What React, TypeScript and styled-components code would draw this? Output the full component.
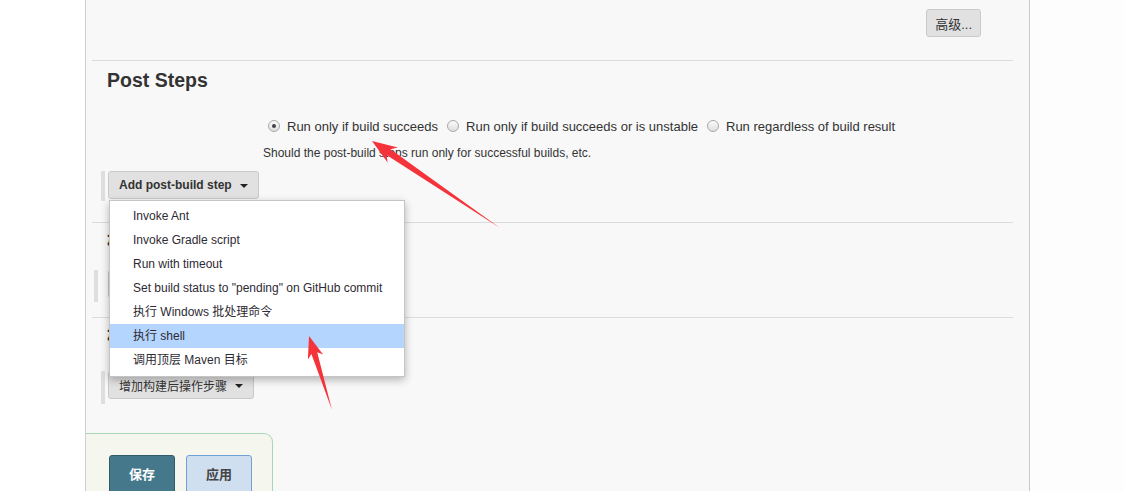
import React from "react";
import styled, { createGlobalStyle } from "styled-components";

const Global = createGlobalStyle`
  html, body { margin: 0; padding: 0; height: 100%; overflow: hidden; background: #fdfdfd; }
  #root { height: 100%; }
  * { box-sizing: border-box; }
  body { font-family: "Liberation Sans", Arial, "Noto Sans CJK SC", sans-serif; font-size: 13px; color: #333; }
`;

const Page = styled.div`
  position: relative;
  display: flex;
  height: 491px;
  width: 1124px;
`;

const Gutter = styled.div`
  width: 85px;
  flex: none;
  background: #ffffff;
`;

const Panel = styled.div`
  width: 945px;
  flex: none;
  background: #f8f8f8;
  border-left: 1px solid #cfcfcf;
  border-right: 1px solid #c8c8c8;
  display: flex;
  flex-direction: column;
`;

const Inner = styled.div`
  padding: 0 16px 0 6px;
  display: flex;
  flex-direction: column;
`;

const Section = styled.div<{ $h: number }>`
  height: ${(p) => p.$h}px;
  border-bottom: 1px solid #dcdcdc;
  display: flex;
  flex-direction: column;
  flex: none;
`;

const LastSection = styled.div`
  height: 115px;
  display: flex;
  flex-direction: column;
  flex: none;
`;

const AdvancedRow = styled.div`
  display: flex;
  justify-content: flex-end;
  padding: 9px 32px 0 0;
`;

const GrayButton = styled.button<{ $bold?: boolean; $fs?: number; $pad?: number }>`
  height: 28px;
  padding: 0 ${(p) => p.$pad ?? 10}px;
  border: 1px solid #c9c9c9;
  border-radius: 3px;
  background: #e1e1e1;
  color: #333;
  font-family: "Liberation Sans", Arial, "Noto Sans CJK SC", sans-serif;
  font-size: ${(p) => p.$fs ?? 13}px;
  font-weight: ${(p) => (p.$bold ? 700 : 400)};
  display: flex;
  align-items: center;
  gap: 8px;
  cursor: pointer;
`;

const Caret = styled.span`
  width: 0;
  height: 0;
  border-left: 4px solid transparent;
  border-right: 4px solid transparent;
  border-top: 4px solid #222;
  margin-top: 1px;
`;

const Heading = styled.h2<{ $top: number }>`
  margin: ${(p) => p.$top}px 0 0 15px;
  font-size: 19.5px;
  line-height: 24px;
  font-weight: 700;
  color: #333;
`;

const OptionBlock = styled.div`
  margin: 24px 0 0 171px;
  display: flex;
  flex-direction: column;
`;

const RadioRow = styled.div`
  display: flex;
  align-items: center;
  height: 20px;
  padding-left: 5px;
`;

const RadioLabel = styled.label`
  display: flex;
  align-items: center;
  margin-right: 9px;
  font-size: 13px;
  color: #333;
  white-space: nowrap;
`;

const RadioDot = styled.span<{ $on?: boolean }>`
  width: 12px;
  height: 12px;
  border-radius: 50%;
  border: 1px solid #a9a9a9;
  background: linear-gradient(#fbfbfb, #dedede);
  margin-right: 7px;
  display: flex;
  align-items: center;
  justify-content: center;
  &::after {
    content: "";
    display: ${(p) => (p.$on ? "block" : "none")};
    width: 4px;
    height: 4px;
    border-radius: 50%;
    background: #444;
  }
`;

const Help = styled.div`
  margin-top: 9px;
  height: 16px;
  line-height: 16px;
  font-size: 12px;
  color: #333;
`;

const StepRow = styled.div<{ $top: number; $left?: number; $gap?: number }>`
  margin: ${(p) => p.$top}px 0 0 ${(p) => p.$left ?? 9}px;
  display: flex;
  align-items: flex-start;
  gap: ${(p) => p.$gap ?? 3}px;
  position: relative;
`;

const Handle = styled.div<{ $h?: number }>`
  width: 4px;
  height: ${(p) => p.$h ?? 30}px;
  background: #dedede;
`;

const MenuAnchor = styled.div`
  position: relative;
`;

const Menu = styled.ul`
  position: absolute;
  top: 100%;
  left: 1px;
  width: 296px;
  margin: 1px 0 0;
  padding: 3px 0 4px;
  list-style: none;
  background: #fff;
  border: 1px solid #c4c4c4;
  box-shadow: 0 3px 8px rgba(0, 0, 0, 0.28);
  z-index: 5;
`;

const MenuItem = styled.li<{ $active?: boolean }>`
  height: 24px;
  line-height: 24px;
  padding-left: 23px;
  font-size: 12px;
  color: #2e2a33;
  background: ${(p) => (p.$active ? "#b4d5fe" : "transparent")};
  white-space: nowrap;
`;

const BottomBox = styled.div`
  margin-top: auto;
  width: 187px;
  height: 58px;
  border-top: 1px solid #a9d6b6;
  border-right: 1px solid #a9d6b6;
  border-top-right-radius: 9px;
  background: #f5f7ee;
  display: flex;
  gap: 11px;
  padding: 21px 0 0 23px;
`;

const ActionButton = styled.button<{ $primary?: boolean }>`
  width: 66px;
  height: 40px;
  border-radius: 3px;
  border: 1px solid ${(p) => (p.$primary ? "#2f5c6b" : "#6fa2d6")};
  background: ${(p) => (p.$primary ? "#44788a" : "#cfdff0")};
  color: ${(p) => (p.$primary ? "#ffffff" : "#444")};
  font-family: "Noto Sans CJK SC", sans-serif;
  font-weight: 700;
  font-size: 13px;
  padding: 0 0 4px;
`;

const Overlay = styled.svg`
  position: absolute;
  left: 0;
  top: 0;
  pointer-events: none;
  z-index: 10;
`;

const items = [
  "Invoke Ant",
  "Invoke Gradle script",
  "Run with timeout",
  'Set build status to "pending" on GitHub commit',
  "执行 Windows 批处理命令",
  "执行 shell",
  "调用顶层 Maven 目标",
];

export default function App() {
  return (
    <>
      <Global />
      <Page>
        <Gutter />
        <Panel>
          <Inner>
            <Section $h={61}>
              <AdvancedRow>
                <GrayButton $pad={8}>高级...</GrayButton>
              </AdvancedRow>
            </Section>
            <Section $h={162}>
              <Heading $top={7}>Post Steps</Heading>
              <OptionBlock>
                <RadioRow>
                  <RadioLabel>
                    <RadioDot $on />
                    Run only if build succeeds
                  </RadioLabel>
                  <RadioLabel>
                    <RadioDot />
                    Run only if build succeeds or is unstable
                  </RadioLabel>
                  <RadioLabel>
                    <RadioDot />
                    Run regardless of build result
                  </RadioLabel>
                </RadioRow>
                <Help>Should the post-build steps run only for successful builds, etc.</Help>
              </OptionBlock>
              <StepRow $top={10}>
                <Handle />
                <MenuAnchor>
                  <GrayButton $bold $fs={12} $pad={10}>
                    Add post-build step
                    <Caret />
                  </GrayButton>
                  <Menu>
                    {items.map((t, i) => (
                      <MenuItem key={t} $active={i === 5}>
                        {t}
                      </MenuItem>
                    ))}
                  </Menu>
                </MenuAnchor>
              </StepRow>
            </Section>
            <Section $h={95}>
              <Heading $top={6}>构建设置</Heading>
              <StepRow $top={17} $left={2} $gap={10}>
                <Handle $h={32} />
                <GrayButton>增加构建步骤</GrayButton>
              </StepRow>
            </Section>
            <LastSection>
              <Heading $top={6}>构建后操作</Heading>
              <StepRow $top={23}>
                <Handle $h={33} />
                <GrayButton $fs={12} $pad={10}>
                  增加构建后操作步骤
                  <Caret />
                </GrayButton>
              </StepRow>
            </LastSection>
          </Inner>
          <BottomBox>
            <ActionButton $primary>保存</ActionButton>
            <ActionButton>应用</ActionButton>
          </BottomBox>
        </Panel>
      </Page>
      <Overlay width="1124" height="491" viewBox="0 0 1124 491">
        <polygon
          fill="#f4333a"
          points="372,141 397.8,147.6 390.5,149.3 500,228 386.5,155.1 387.6,162.5"
        />
        <polygon
          fill="#f4333a"
          points="309,336 323.1,354.6 317.2,352.3 332,410 311.4,354.1 307.9,359.4"
        />
      </Overlay>
    </>
  );
}
